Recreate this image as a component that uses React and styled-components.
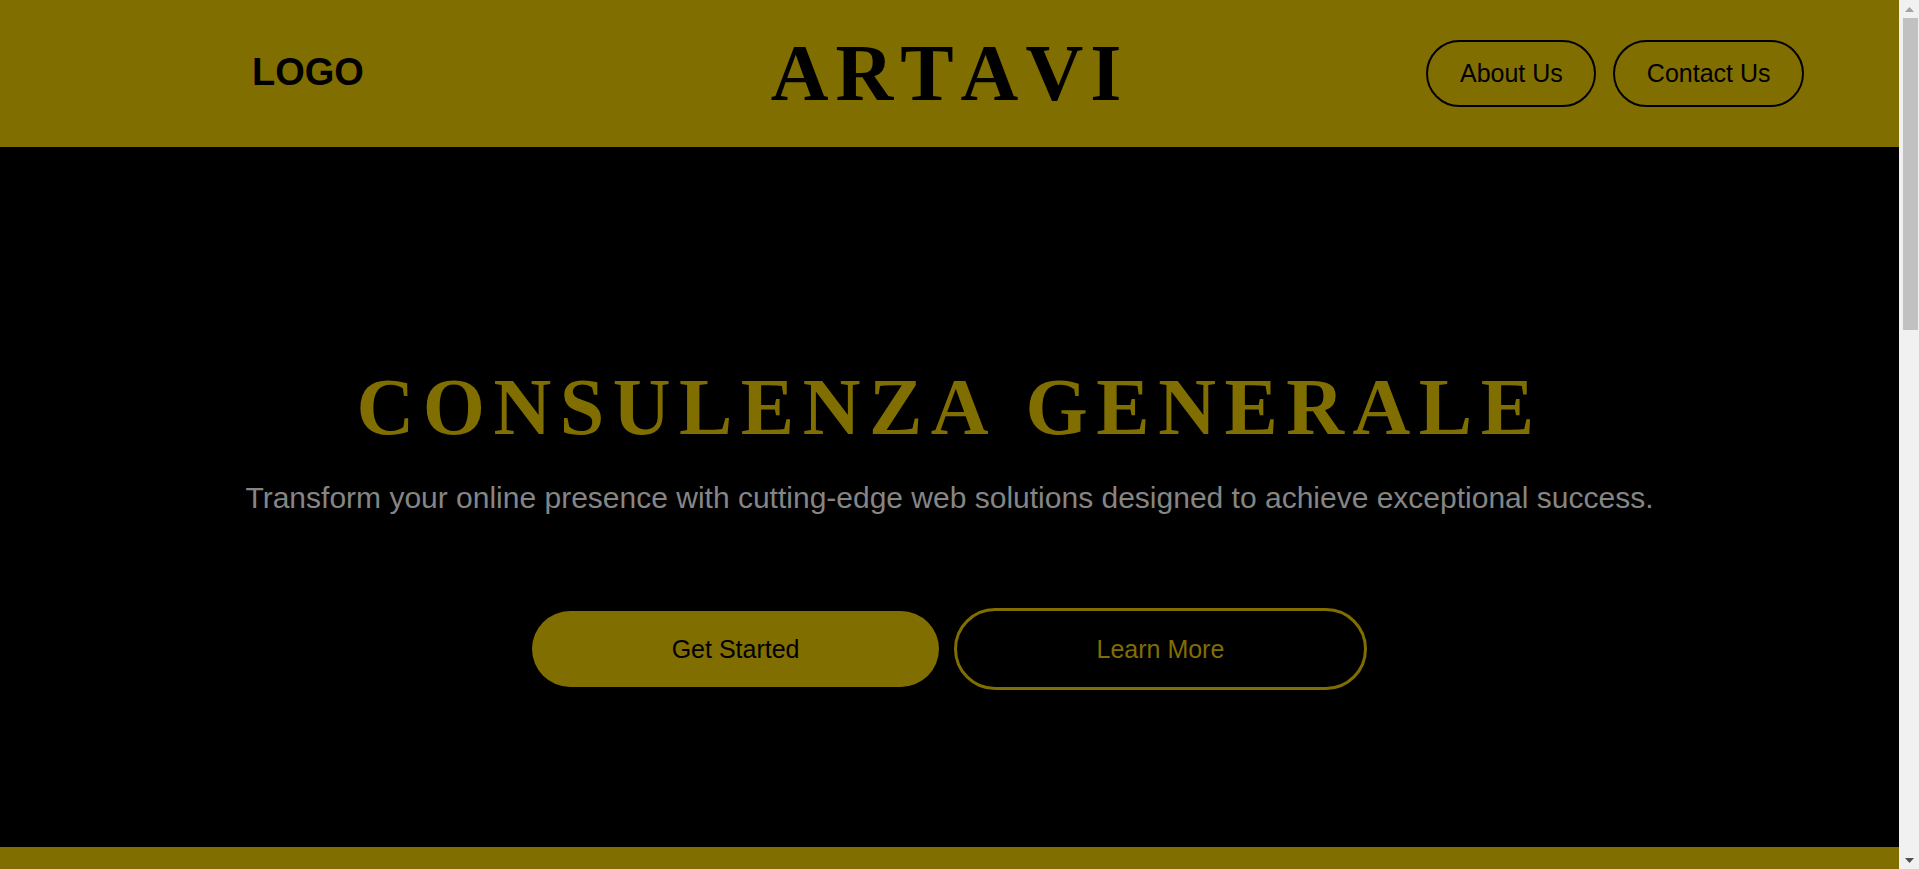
import React from "react";
import styled, { createGlobalStyle } from "styled-components";

const OLIVE = "#806e00";

const GlobalStyle = createGlobalStyle`
  html, body {
    margin: 0;
    padding: 0;
    background: #000;
  }
  body {
    font-family: "Liberation Sans", Arial, sans-serif;
  }
  * { box-sizing: border-box; }
`;

const Page = styled.div`
  display: flex;
  flex-direction: column;
  margin-right: 20px;
`;

const Header = styled.header`
  height: 147px;
  background: ${OLIVE};
  display: grid;
  grid-template-columns: 1fr auto 1fr;
  align-items: center;
`;

const Logo = styled.div`
  justify-self: start;
  margin-left: 252px;
  margin-bottom: 3px;
  font-family: "Liberation Sans", Arial, sans-serif;
  font-weight: 700;
  font-size: 38px;
  color: #000;
`;

const Brand = styled.div`
  font-family: "Liberation Serif", "Times New Roman", serif;
  font-weight: 700;
  font-size: 80px;
  letter-spacing: 7px;
  font-kerning: none;
  color: #000;
  line-height: normal;
`;

const Nav = styled.nav`
  justify-self: end;
  margin-right: 95px;
  display: flex;
  gap: 17px;
`;

const NavButton = styled.button`
  font-family: "Liberation Sans", Arial, sans-serif;
  font-size: 25px;
  line-height: normal;
  color: #000;
  background: transparent;
  border: 2px solid #000;
  border-radius: 999px;
  padding: 17px 31.5px;
  cursor: pointer;
`;

const Hero = styled.section`
  height: 700px;
  background: #000;
  display: flex;
  flex-direction: column;
  align-items: center;
  padding-top: 215px;
`;

const Title = styled.h1`
  margin: 0 0 28px;
  font-family: "Liberation Serif", "Times New Roman", serif;
  font-weight: 700;
  font-size: 80px;
  letter-spacing: 8.5px;
  font-kerning: none;
  line-height: normal;
  color: ${OLIVE};
`;

const Subtitle = styled.p`
  margin: 0 0 93px;
  font-family: "Liberation Sans", Arial, sans-serif;
  font-size: 30px;
  line-height: normal;
  color: #858585;
`;

const Actions = styled.div`
  display: flex;
  align-items: center;
  gap: 15px;
`;

const CTA = styled.button`
  font-family: "Liberation Sans", Arial, sans-serif;
  font-size: 25px;
  line-height: normal;
  border-radius: 999px;
  padding: 23.6px 139.5px;
  cursor: pointer;
  background: ${(p) => (p.$outline ? "transparent" : OLIVE)};
  color: ${(p) => (p.$outline ? OLIVE : "#000")};
  border: ${(p) => (p.$outline ? `3px solid ${OLIVE}` : "none")};
`;

const Footer = styled.footer`
  background: ${OLIVE};
  height: 1478px;
`;

/* window scrollbar, drawn over the right edge of the viewport */
const ScrollRail = styled.div`
  position: fixed;
  top: 0;
  right: 0;
  width: 20px;
  height: 100vh;
  background: #f1f1f1;
  display: flex;
  flex-direction: column;
  align-items: center;
`;

const ArrowButton = styled.div`
  height: 18px;
  width: 100%;
  display: flex;
  align-items: center;
  justify-content: center;
  margin-top: ${(p) => (p.$bottom ? "auto" : "0")};
`;

const Thumb = styled.div`
  width: 15px;
  height: 312px;
  margin-left: 2px;
  background: #c1c1c1;
`;

function Arrow({ down, color }) {
  return (
    <svg width="9" height="5" viewBox="0 0 9 5">
      {down ? (
        <polygon points="0,0 9,0 4.5,5" fill={color} />
      ) : (
        <polygon points="0,5 9,5 4.5,0" fill={color} />
      )}
    </svg>
  );
}

export default function App() {
  return (
    <>
      <GlobalStyle />
      <Page>
        <Header>
          <Logo>LOGO</Logo>
          <Brand>ARTAVI</Brand>
          <Nav>
            <NavButton>About Us</NavButton>
            <NavButton>Contact Us</NavButton>
          </Nav>
        </Header>
        <Hero>
          <Title>CONSULENZA GENERALE</Title>
          <Subtitle>
            Transform your online presence with cutting-edge web solutions designed to achieve exceptional success.
          </Subtitle>
          <Actions>
            <CTA>Get Started</CTA>
            <CTA $outline>Learn More</CTA>
          </Actions>
        </Hero>
        <Footer />
      </Page>
      <ScrollRail aria-hidden="true">
        <ArrowButton>
          <Arrow color="#a3a3a3" />
        </ArrowButton>
        <Thumb />
        <ArrowButton $bottom>
          <Arrow down color="#505050" />
        </ArrowButton>
      </ScrollRail>
    </>
  );
}
